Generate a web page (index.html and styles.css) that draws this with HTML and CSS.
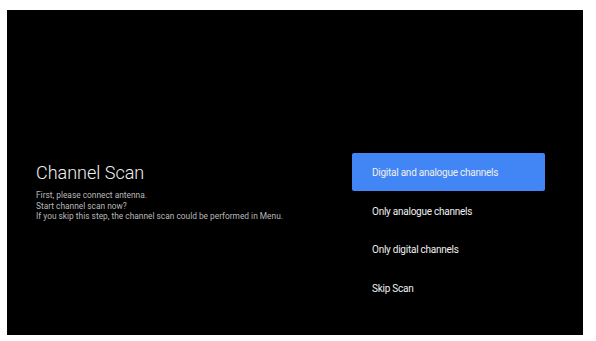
FILE: index.html
```html
<!DOCTYPE html>
<html lang="en">
<head>
    <meta charset="UTF-8">
    <meta name="viewport" content="width=device-width, initial-scale=1.0">
    <title>Channel Scan</title>
    <link rel="stylesheet" href="styles.css">
</head>
<body>

    <div class="screen">
        <div class="intro">
            <h1 class="title">Channel Scan</h1>
            <p class="note">First, please connect antenna.</p>
            <p class="note">Start channel scan now?</p>
            <p class="note">If you skip this step, the channel scan could be performed in Menu.</p>
        </div>

        <!-- Scan options -->
        <ul class="menu">
            <li class="menu-item active">Digital and analogue channels</li>
            <li class="menu-item">Only analogue channels</li>
            <li class="menu-item">Only digital channels</li>
            <li class="menu-item">Skip Scan</li>
        </ul>
    </div>

</body>
</html>
```

FILE: styles.css
```css
/* Basic Reset */
* {
    margin: 0;
    padding: 0;
    box-sizing: border-box;
}

body {
    font-family: 'Roboto', 'Liberation Sans', sans-serif;
    background: #ffffff;
    padding: 10px 13px 6px 7px;
}

/* TV screen */
.screen {
    background: #000000;
    width: 576px;
    height: 325px;
    display: flex;
    justify-content: space-between;
    padding: 143px 38px 0 29px;
}

.intro {
    padding-top: 9px;
}

.title {
    font-size: 18px;
    font-weight: 300;
    color: #f2f2f2;
    line-height: 22px;
    margin-bottom: 6px;
}

.note {
    font-size: 8.35px;
    color: #b8b8b8;
    line-height: 10.6px;
}

.menu {
    list-style: none;
    width: 193px;
    padding-top: 1px;
}

.menu-item {
    height: 38.5px;
    display: flex;
    align-items: center;
    padding-left: 20px;
    font-size: 10px;
    letter-spacing: -0.25px;
    color: #f0f0f0;
}

.menu-item.active {
    height: 38px;
    margin-top: -1px;
    margin-bottom: 1px;
    background: #4285f4;
    border-radius: 2px;
}
```
